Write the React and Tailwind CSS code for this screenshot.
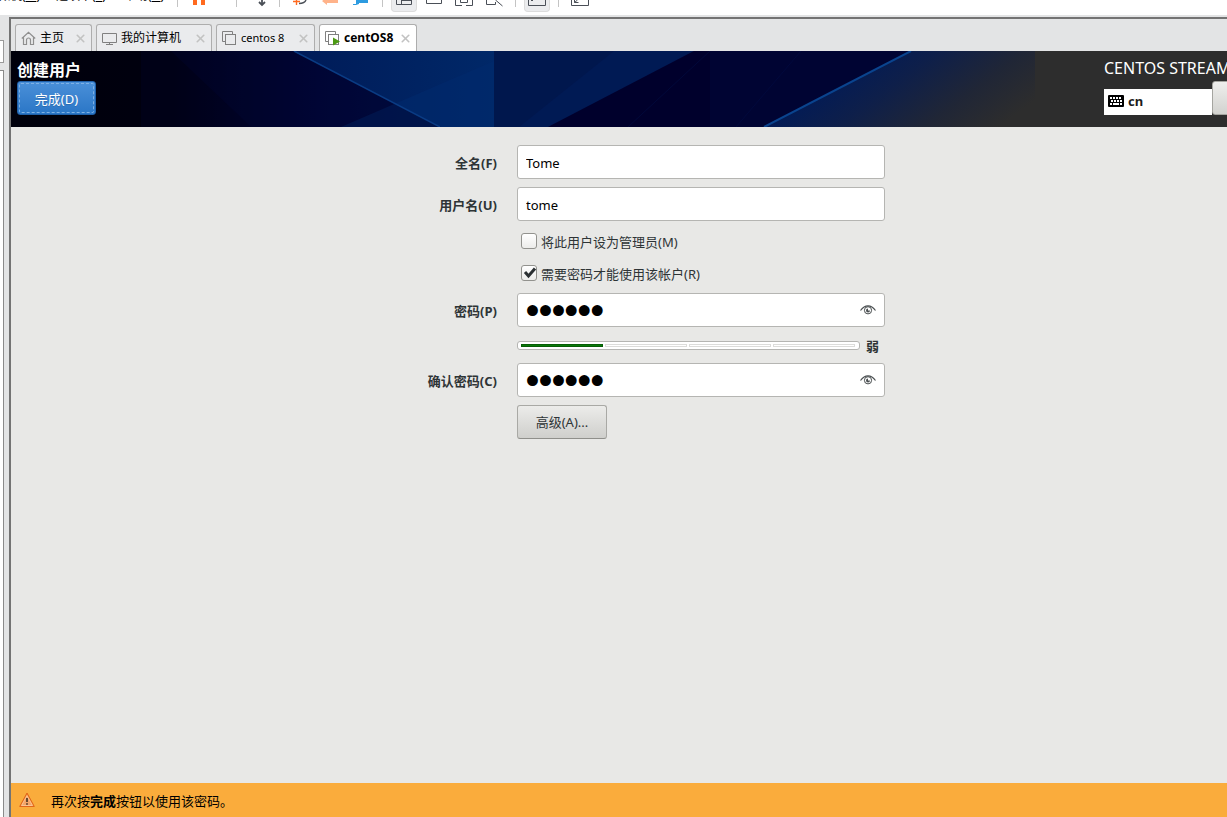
import { useState } from 'react';
import { X } from 'lucide-react';

const menus = [
  { text: '虚拟机', letter: 'M', pos: 'w-[56px] justify-end pr-4' },
  { text: '选项卡', letter: 'T', pos: 'w-[68px]' },
  { text: '帮助', letter: 'H', pos: 'w-[53px]' },
];

function HomeIcon() {
  return (
    <svg width="15" height="15" viewBox="0 0 15 15" fill="none" stroke="#8f8f8f" strokeWidth="1.2">
      <path d="M.8 7.500L7.500 1.200l6.700 6.300M2.500 6.500v7h3v-4.500a2 2 0 0 1 4 0v4.500h3v-7" />
    </svg>
  );
}

function MonitorIcon() {
  return (
    <svg width="15" height="15" viewBox="0 0 15 15" fill="none" stroke="#808080" strokeWidth="1">
      <path d="M.5 2.500h14v9H.5zM4 13.500h7M7.500 11.500v2" />
    </svg>
  );
}

function VmIcon({ running }) {
  return (
    <svg width="15" height="15" viewBox="0 0 15 15" fill="none" stroke="#808080" strokeWidth="1">
      <path d="M3.500 10.500h-3v-10h10v3" />
      <rect x="3.500" y="3.500" width="10" height="10" />
      {running && <path d="M8 6.500v8l7-4z" fill="#4c9a14" stroke="none" />}
    </svg>
  );
}

const tabs = [
  { name: '主页', width: 'w-[77px] text-[12px]', icon: <HomeIcon /> },
  { name: '我的计算机', width: 'w-[116px] text-[12px]', icon: <MonitorIcon /> },
  { name: 'centos 8', width: 'w-[99px] text-[11px]', icon: <VmIcon /> },
  { name: 'centOS8', width: 'w-[98px] text-[12px]', icon: <VmIcon running />, active: true },
];

function Separator() {
  return <div className="h-[7px] w-px bg-[#c4c4c4]" />;
}

function ToolButton({ label, pressed, width = 'w-[26px]', children }) {
  return (
    <button
      aria-label={label}
      className={`flex h-3 shrink-0 justify-center ${width} ${
        pressed ? 'rounded-b border border-t-0 border-[#dcdcdc] bg-[#ebecee]' : ''
      }`}
    >
      <svg width="18" height="8" viewBox="0 0 18 8" fill="none" stroke="#4a4f57" strokeWidth="1" className="shrink-0">
        {children}
      </svg>
    </button>
  );
}

function Toolbar() {
  return (
    <div className="flex h-[15px] shrink-0 items-start overflow-hidden bg-white">
      <nav className="flex w-[177px] shrink-0">
        {menus.map((m) => (
          <button key={m.letter} className={`-mt-3 flex h-4 shrink-0 text-[12px] leading-4 whitespace-nowrap text-black ${m.pos}`}>
            {m.text}(<span className="underline">{m.letter}</span>)
          </button>
        ))}
      </nav>
      <Separator />
      <div className="flex w-[58px] shrink-0 pl-2">
        <ToolButton label="暂停">
          <path d="M3 0h4v5H3zM11 0h4v5h-4z" fill="#ff6a1f" stroke="none" />
        </ToolButton>
      </div>
      <Separator />
      <div className="flex w-[42px] shrink-0 pl-3">
        <ToolButton label="发送">
          <path d="M9 0v5M6 2l3 3 3-3" strokeWidth="1.8" />
        </ToolButton>
      </div>
      <Separator />
      <div className="flex w-[102px] shrink-0 pl-[5px]">
        <ToolButton label="拍摄快照" width="w-[30px]">
          <path d="M2 1.500h7M5.500 0v5" stroke="#ff6a1f" strokeWidth="1.4" />
          <path d="M8 3.500c4 0 6-1 7-3.500" strokeWidth="1.4" />
        </ToolButton>
        <ToolButton label="恢复快照" width="w-[30px]">
          <path d="M1 1l4-3v2h12v3H6v2z" fill="#ffb38a" stroke="none" />
        </ToolButton>
        <ToolButton label="管理快照" width="w-[30px]">
          <path d="M2 4h3V0h12v3H8v1L5 5H2z" fill="#2c9be0" stroke="none" />
        </ToolButton>
      </div>
      <Separator />
      <div className="flex w-[132px] shrink-0 gap-1 pl-2">
        <ToolButton label="显示库" pressed>
          <path d="M1.500 0v4.500h15V0M6.500 0v4.500M6.500 .5h10" />
        </ToolButton>
        <ToolButton label="缩略图">
          <path d="M1.500 0v3.500h15V0" />
        </ToolButton>
        <ToolButton label="全屏">
          <path d="M.5 0v5.500h17V0M5.500 0v2.500h7V0" />
          <path d="M7 5.500h4" stroke="#fff" />
        </ToolButton>
        <ToolButton label="Unity">
          <path d="M1.500 0v4.500h9V2M10.500 0l7 6" />
        </ToolButton>
      </div>
      <Separator />
      <div className="flex w-[42px] shrink-0 pl-2">
        <ToolButton label="控制台" pressed>
          <path d="M.5 0v5.500h17V0M3 .5h2" />
        </ToolButton>
      </div>
      <Separator />
      <div className="flex shrink-0 pl-2">
        <ToolButton label="自由拉伸">
          <path d="M.5 0v5.500h17V0M3.500 0v2.500h4M3.500 2.500l3-2.500" />
        </ToolButton>
      </div>
    </div>
  );
}

function Backdrop() {
  return (
    <svg className="absolute top-0 left-0" width="1024" height="76" viewBox="0 0 1024 76" aria-hidden="true">
      <defs>
        <linearGradient id="night" x1="0" x2="1">
          <stop offset="0" stopColor="#00000b" />
          <stop offset="0.16" stopColor="#00000f" />
          <stop offset="0.3" stopColor="#00063a" />
          <stop offset="0.42" stopColor="#00124c" />
        </linearGradient>
        <linearGradient id="beam" x1="0" x2="1">
          <stop offset="0" stopColor="#001b58" />
          <stop offset="1" stopColor="#002868" />
        </linearGradient>
        <linearGradient id="fade" gradientUnits="userSpaceOnUse" x1="800" y1="30" x2="890" y2="150">
          <stop offset="0" stopColor="#001a58" />
          <stop offset="0.35" stopColor="#0e1f4a" />
          <stop offset="0.7" stopColor="#202636" />
          <stop offset="1" stopColor="#2d2d2d" />
        </linearGradient>
      </defs>
      <rect width="1024" height="76" fill="url(#night)" />
      <path d="M160 0h160l110 76H240z" fill="#000a45" opacity="0.25" />
      <path d="M282 0h201v76h-53z" fill="url(#beam)" />
      <path d="M330 76l153-66v66z" fill="#002a6c" opacity="0.6" />
      <path d="M130 0H282L430 76H130z" fill="#000428" opacity="0.35" />
      <path d="M283 0l146 76" stroke="#0a3c84" strokeWidth="1.5" />
      <path d="M483 0h200L537 76h-54z" fill="#001a54" />
      <path d="M483 0h120l-95 76h-25z" fill="#00164a" opacity="0.6" />
      <path d="M683 0h217L753 76H537z" fill="#00002c" />
      <path d="M699 0h201L753 76h-54z" fill="#000433" />
      <path d="M790 0L725 76M699 0l-82 76" stroke="#000c40" strokeWidth="0.7" />
      <path d="M900 0h124v76H753z" fill="url(#fade)" />
      <path d="M900 0L753 76" stroke="#0a448e" strokeWidth="2" />
    </svg>
  );
}

function KeyboardIcon() {
  return (
    <svg width="16" height="12" viewBox="0 0 16 12">
      <rect width="16" height="12" rx="1" fill="#000" />
      <path
        d="M2 2h2v2H2zM5 2h2v2H5zM8 2h2v2H8zM11 2h2v2h-2zM3 5h2v2H3zM6 5h2v2H6zM9 5h2v2H9zM12 5h2v2h-2zM2 8h2v2H2zM5 8h6v2H5zM12 8h2v2h-2z"
        fill="#fff"
      />
    </svg>
  );
}

function EyeIcon() {
  return (
    <svg width="16" height="10" viewBox="0 0 16 10" fill="none" stroke="#4a4f51">
      <path d="M.5 5.500C3 2 5 .8 8 .8s5 1.200 7.500 4.700" strokeWidth="1.2" />
      <circle cx="8" cy="5.300" r="3.600" strokeWidth="1" />
      <path d="M8 3.500a2 2 0 1 0 2 2H8z" fill="#4a4f51" stroke="none" />
    </svg>
  );
}

const inputStyle = 'block h-[34px] w-full rounded-[3px] border border-[#b5b5b2] bg-white px-2 pt-[2px] text-black outline-none';

function Label({ id, children }) {
  return (
    <label htmlFor={id} className="pt-[2px] text-right font-bold">
      {children}
    </label>
  );
}

function PasswordField({ id }) {
  const [value, setValue] = useState('centos');
  const [visible, setVisible] = useState(false);

  return (
    <div className="relative">
      <input
        id={id}
        type={visible ? 'text' : 'password'}
        value={value}
        onChange={(e) => setValue(e.target.value)}
        className={`${inputStyle} ${
          visible ? 'text-[13px]' : "font-['Liberation_Serif',serif] text-[37px] [-webkit-text-stroke:2px_black]"
        }`}
      />
      <button aria-label="显示密码" onClick={() => setVisible(!visible)} className="absolute top-3 right-[9px]">
        <EyeIcon />
      </button>
    </div>
  );
}

function CheckField({ id, defaultChecked, children }) {
  return (
    <div className="col-start-2 flex h-6 items-center pl-1">
      <span className="relative flex">
        <input
          id={id}
          type="checkbox"
          defaultChecked={defaultChecked}
          className="peer size-4 appearance-none rounded-[3px] border border-[#92928e] bg-linear-to-b from-white to-[#ececea]"
        />
        <svg className="pointer-events-none absolute top-0 left-0 hidden peer-checked:block" width="16" height="16" viewBox="0 0 16 16">
          <path d="M4 7l3.500 4L14 3.500" fill="none" stroke="#2b3033" strokeWidth="3" />
        </svg>
      </span>
      <label htmlFor={id} className="pt-[2px] pl-1">
        {children}
      </label>
    </div>
  );
}

export default function App() {
  return (
    <div className="flex min-h-screen flex-col overflow-hidden bg-[#e3e4e5] font-['Noto_Sans','Noto_Sans_CJK_SC',sans-serif] text-[13px] leading-5 text-[#2e3436]">
      <Toolbar />
      <div className="flex grow">
        <div className="flex w-[9px] shrink-0 flex-col items-start pt-[25px]">
          <div className="h-[23px] w-1 border-y border-r border-[#9a9a9a] bg-white" />
          <div className="mt-[7px] w-1 grow border-t border-r border-[#8a8a8a] bg-white" />
        </div>
        <div className="mt-[2px] flex min-w-0 grow flex-col border-t-2 border-l-2 border-[#737373]">
          <div className="flex shrink-0 gap-1 pt-[5px] pl-1">
            {tabs.map((tab) => (
              <div
                key={tab.name}
                className={`flex h-[27px] items-center rounded-t-[3px] border border-b-0 border-[#adadad] pr-1 pl-[5px] text-black ${tab.width} ${
                  tab.active ? 'bg-white font-bold' : 'bg-[#eaebed]'
                }`}
              >
                <span className="shrink-0">{tab.icon}</span>
                <button className="grow pl-1 text-left whitespace-nowrap">{tab.name}</button>
                <button aria-label="关闭" className="shrink-0">
                  <X size={13} color="#c2c2c2" strokeWidth={3} />
                </button>
              </div>
            ))}
          </div>

          <header className="relative flex h-[76px] shrink-0 justify-between overflow-hidden bg-[#2d2d2d]">
            <Backdrop />
            <div className="relative pt-2 pl-[6px]">
              <h1 className="h-[22px] text-[16px] leading-[22px] font-bold text-white">创建用户</h1>
              <button className="h-[34px] w-[79px] rounded-[3px] border border-[#1f5fa8] bg-linear-to-b from-[#4a90d9] to-[#2a76c6] p-px text-white">
                <span className="flex h-full items-center justify-center rounded-[2px] border border-dashed border-[#7fb0e4] pt-[2px] text-shadow-2xs">
                  完成(D)
                </span>
              </button>
            </div>
            <div className="relative w-[123px] pt-1">
              <div className="text-[16px] leading-[26px] whitespace-nowrap text-white">CENTOS STREAM</div>
              <div className="flex items-end">
                <button className="mt-2 flex h-[26px] w-[108px] shrink-0 items-center gap-1 bg-white pb-[2px] pl-1 font-bold text-[#1c1c1c]">
                  <KeyboardIcon />
                  cn
                </button>
                <button
                  aria-label="帮助"
                  className="h-[34px] w-10 shrink-0 rounded-[3px] border border-[#a5a5a0] bg-linear-to-b from-[#efefed] to-[#d2d2cf]"
                />
              </div>
            </div>
          </header>

          <main className="grow bg-[#e8e8e6] pt-[18px]">
            <form className="grid grid-cols-[486px_368px] items-center gap-x-5 gap-y-2" onSubmit={(e) => e.preventDefault()}>
              <Label id="fullname">全名(F)</Label>
              <input id="fullname" defaultValue="Tome" className={inputStyle} />
              <Label id="username">用户名(U)</Label>
              <input id="username" defaultValue="tome" className={inputStyle} />
              <CheckField id="admin">将此用户设为管理员(M)</CheckField>
              <CheckField id="require" defaultChecked>
                需要密码才能使用该帐户(R)
              </CheckField>
              <Label id="password">密码(P)</Label>
              <PasswordField id="password" />
              <div className="col-start-2 flex h-5 items-center">
                <div
                  role="meter"
                  aria-label="密码强度"
                  aria-valuenow={1}
                  aria-valuemin={0}
                  aria-valuemax={4}
                  className="flex h-[9px] w-[343px] gap-[2px] rounded-[3px] border border-[#b5b5b2] bg-white py-[2px] pr-1 pl-[3px]"
                >
                  <div className="grow border border-[#065c06] bg-[#087a08]" />
                  <div className="grow border border-[#dcdcda]" />
                  <div className="grow border border-[#dcdcda]" />
                  <div className="grow border border-[#dcdcda]" />
                </div>
                <span className="pt-[2px] pl-[6px] font-bold">弱</span>
              </div>
              <Label id="confirm">确认密码(C)</Label>
              <PasswordField id="confirm" />
              <button
                type="button"
                className="col-start-2 h-[34px] w-[90px] rounded-[3px] border border-[#a9a9a5] border-b-[#8f8f8b] bg-linear-to-b from-[#ececea] to-[#cfcfcc]"
              >
                高级(A)...
              </button>
            </form>
          </main>

          <footer className="flex h-[34px] shrink-0 items-center gap-4 bg-[#faac3c] pl-2 text-black">
            <svg width="16" height="16" viewBox="0 0 16 16">
              <path d="M8 1L15.300 14.500H.7z" fill="#f57f22" stroke="#e0661c" strokeLinejoin="round" />
              <path d="M8 3.500l5.500 10h-11z" fill="#f3a468" stroke="#fbd0a8" strokeWidth="0.8" />
              <path d="M8 6v4M8 11.300v1.500" stroke="#3a2a1c" strokeWidth="1.5" />
            </svg>
            <p className="pt-[2px]">
              再次按<b>完成</b>按钮以使用该密码。
            </p>
          </footer>
        </div>
      </div>
    </div>
  );
}
